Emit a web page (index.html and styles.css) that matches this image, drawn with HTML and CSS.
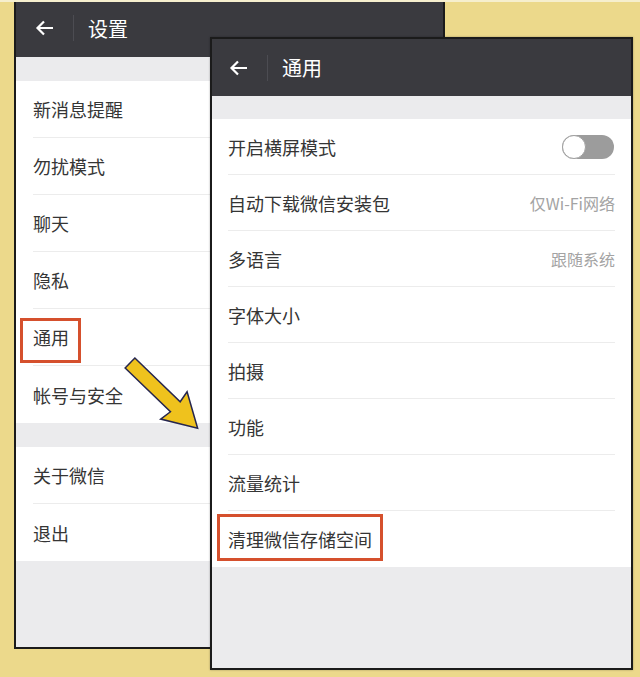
FILE: index.html
```html
<!DOCTYPE html>
<html lang="zh-CN">
<head>
  <meta charset="UTF-8" />
  <meta name="viewport" content="width=device-width, initial-scale=1.0" />
  <title>设置 - 通用</title>
  <link rel="stylesheet" href="styles.css">
</head>
<body>
  <div class="board">
    <!-- back window: 设置 -->
    <div class="phone phone-back">
      <div class="topbar">
        <svg class="back" viewBox="0 0 20 20"><path d="M18 10H3M9 3.5L2.5 10 9 16.5"/></svg>
        <span class="sep"></span>
        <span class="title">设置</span>
      </div>
      <div class="gap"></div>
      <div class="group">
        <div class="row"><span>新消息提醒</span></div>
        <div class="row"><span>勿扰模式</span></div>
        <div class="row"><span>聊天</span></div>
        <div class="row"><span>隐私</span></div>
        <div class="row"><span class="mark mark-left">通用</span></div>
        <div class="row"><span>帐号与安全</span></div>
      </div>
      <div class="gap"></div>
      <div class="group">
        <div class="row"><span>关于微信</span></div>
        <div class="row"><span>退出</span></div>
      </div>
      <div class="fill"></div>
    </div>

    <!-- front window: 通用 -->
    <div class="phone phone-front">
      <div class="topbar">
        <svg class="back" viewBox="0 0 20 20"><path d="M18 10H3M9 3.5L2.5 10 9 16.5"/></svg>
        <span class="sep"></span>
        <span class="title">通用</span>
      </div>
      <div class="gap"></div>
      <div class="group">
        <div class="row"><span>开启横屏模式</span><span class="toggle"><i></i></span></div>
        <div class="row"><span>自动下载微信安装包</span><span class="value">仅Wi-Fi网络</span></div>
        <div class="row"><span>多语言</span><span class="value">跟随系统</span></div>
        <div class="row"><span>字体大小</span></div>
        <div class="row"><span>拍摄</span></div>
        <div class="row"><span>功能</span></div>
        <div class="row"><span>流量统计</span></div>
        <div class="row"><span class="mark mark-right">清理微信存储空间</span></div>
      </div>
      <div class="fill"></div>
    </div>

    <svg class="pointer" viewBox="110 345 100 100">
      <polygon transform="translate(130 363) rotate(44)" points="0,-7 63,-7 61,-19 94,0 61,19 63,7 0,7"/>
    </svg>
  </div>
</body>
</html>
```

FILE: styles.css
```css
* {
  box-sizing: border-box;
}
body {
  margin: 0;
  font-family: "Noto Sans CJK SC", "Noto Sans", sans-serif;
  background: #ecd98b;
  color: #353535;
}
.board {
  position: relative;
  width: 640px;
  height: 677px;
  overflow: hidden;
  background: linear-gradient(#f6efce, #f6efce) top / 100% 2px no-repeat;
}
.phone {
  position: absolute;
  display: flex;
  flex-direction: column;
  background: #ebebed;
  border: 2px solid #1b1b1b;
}
.phone-back {
  left: 14px;
  top: 2px;
  width: 431px;
  height: 647px;
  border-top: none;
}
.phone-front {
  left: 210px;
  top: 37px;
  width: 423px;
  height: 633px;
  box-shadow: 0 0 2px rgba(0,0,0,0.3);
}
.topbar {
  display: flex;
  align-items: center;
  height: 55px;
  background: #3a3a3f;
  color: #fff;
  padding-left: 19px;
  padding-bottom: 3px;
}
.phone-front .topbar {
  height: 57px;
  padding-left: 17px;
  padding-bottom: 0;
}
.back {
  width: 20px;
  height: 20px;
  fill: none;
  stroke: #fff;
  stroke-width: 2.2;
}
.sep {
  width: 1px;
  height: 26px;
  background: #4c4c52;
  margin: 0 14px 0 18px;
}
.title {
  font-size: 20px;
}
.gap {
  height: 24px;
}
.phone-front .gap {
  height: 23px;
}
.group {
  background: #fff;
}
.row {
  display: flex;
  align-items: center;
  justify-content: space-between;
  height: 57px;
  margin: 0 17px;
  font-size: 18px;
  line-height: 26px;
  border-bottom: 1px solid #ececec;
}
.phone-front .row {
  height: 56px;
  margin: 0 16px;
}
.row:last-child {
  border-bottom: none;
}
.value {
  font-size: 16px;
  color: #a3a3a3;
}
.toggle {
  position: relative;
  width: 52px;
  height: 24px;
  border-radius: 12px;
  background: #9c9c9c;
  margin-right: 1px;
}
.toggle i {
  position: absolute;
  left: 0;
  top: 0;
  width: 24px;
  height: 24px;
  border-radius: 50%;
  background: #fff;
  border: 1px solid #a0a0a0;
}
.fill {
  flex: 1;
}
.mark {
  position: relative;
}
.mark::after {
  content: "";
  position: absolute;
  border: 3px solid #d5502d;
}
.mark-left::after {
  left: -13px;
  right: -12px;
  top: -6px;
  bottom: -13px;
}
.mark-right::after {
  left: -11px;
  right: -11px;
  top: -12px;
  bottom: -9px;
}
.pointer {
  position: absolute;
  left: 110px;
  top: 345px;
  width: 100px;
  height: 100px;
}
.pointer polygon {
  fill: #efc21d;
  stroke: #26264f;
  stroke-width: 1.5;
  stroke-linejoin: miter;
}
```
